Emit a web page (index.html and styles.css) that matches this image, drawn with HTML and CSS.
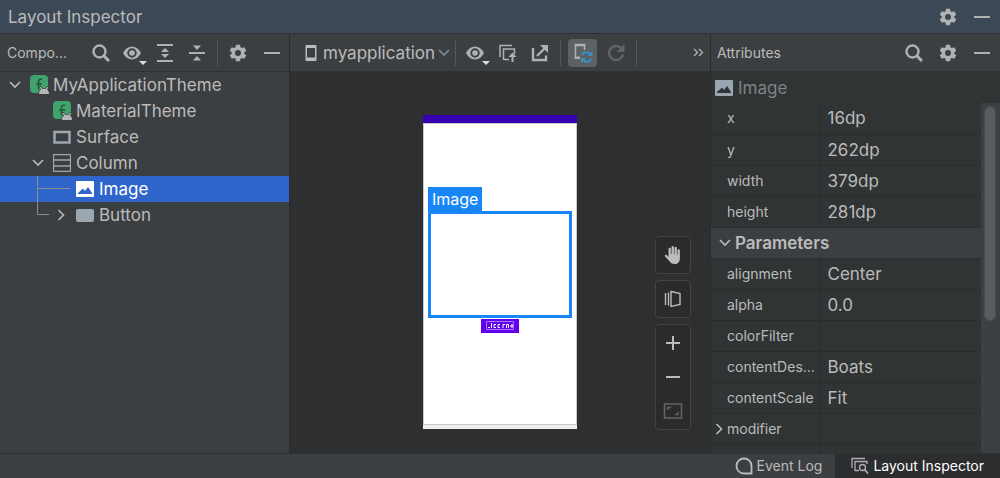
FILE: index.html
```html
<!DOCTYPE html>
<html lang="en">
<head>
  <meta charset="UTF-8">
  <meta name="viewport" content="width=device-width, initial-scale=1.0">
  <title>Layout Inspector</title>
  <link rel="stylesheet" href="styles.css">
</head>
<body>
  <!-- Shared icons -->
  <svg class="sprite" aria-hidden="true">
    <symbol id="gear" viewBox="0 0 18 18">
      <path fill-rule="evenodd" d="M7 .8h4l.5 2.500 1.300.800 2.500-.9 2 3.500-2 1.600v1.400l2 1.600-2 3.500-2.500-.9-1.300.8-.5 2.500H7l-.5-2.500-1.300-.8-2.500.9-2-3.500 2-1.600V8.300l-2-1.600 2-3.500 2.500.9 1.300-.8zM9 6a3 3 0 1 0 0 6 3 3 0 0 0 0-6z"/>
    </symbol>
    <symbol id="dash" viewBox="0 0 18 18"><path d="M1 8h16v2H1z"/></symbol>
    <symbol id="search" viewBox="0 0 18 18">
      <circle cx="7.500" cy="7.500" r="6" fill="none" stroke="currentColor" stroke-width="2.400"/>
      <path d="M12 12l5 5" stroke="currentColor" stroke-width="3"/>
    </symbol>
    <symbol id="eye" viewBox="0 0 22 22">
      <path fill-rule="evenodd" d="M1 11C3.500 6.500 6.500 4.500 10 4.500S16.500 6.500 19 11c-2.500 4.500-5.500 6.500-9 6.500S3.500 15.500 1 11zM10 6.300a4.700 4.700 0 1 0 0 9.400 4.700 4.700 0 0 0 0-9.400z"/>
      <circle cx="10" cy="11" r="2.800"/>
    </symbol>
    <symbol id="image" viewBox="0 0 18 16">
      <path fill-rule="evenodd" d="M1 0h16a1 1 0 0 1 1 1v14a1 1 0 0 1-1 1H1a1 1 0 0 1-1-1V1a1 1 0 0 1 1-1zM2 13h14v-1l-4-6-3 4-2-2.500L2 12z"/>
    </symbol>
    <symbol id="compose" viewBox="0 0 20 20">
      <rect x="0" y="0" width="18" height="18" rx="4" fill="#3fa36b"/>
      <path d="M12 4.500c-2.500-.8-3.500.2-3.500 2.500v7.500M6 9h6" fill="none" stroke="#23543c" stroke-width="1.500"/>
      <path d="M8 20c0-3 1-5 2.300-6L8.800 11h2l1.500 2h3.400l1.500-2h2L17.700 14c1.300 1 2 3 2 6z" fill="#3c3f41"/>
      <path d="M9 19c0-2.300.8-3.800 2-4.500L9.500 12h1.300l1.300 1.800h3.800l1.300-1.800h1.300L17 14.500c1.200.7 2 2.200 2 4.500z" fill="#b4b7b9"/>
    </symbol>
    <symbol id="chevron-down" viewBox="0 0 12 12"><path d="M1 3l5 5 5-5" fill="none" stroke="currentColor" stroke-width="1.600"/></symbol>
    <symbol id="chevron-right" viewBox="0 0 12 12"><path d="M3.500 1l5 5-5 5" fill="none" stroke="currentColor" stroke-width="1.600"/></symbol>
  </svg>

  <header class="title-bar">
    <h1>Layout Inspector</h1>
    <button class="icon-btn" aria-label="Settings"><svg class="icon"><use href="#gear"/></svg></button>
    <button class="icon-btn" aria-label="Hide"><svg class="icon"><use href="#dash"/></svg></button>
  </header>

  <main class="workspace">
    <section class="tree-panel">
      <div class="toolbar tree-toolbar">
        <h2>Compo...</h2>
        <button class="icon-btn" aria-label="Search"><svg class="icon"><use href="#search"/></svg></button>
        <button class="icon-btn has-menu" aria-label="View options"><svg class="icon-eye"><use href="#eye"/></svg></button>
        <button class="icon-btn" aria-label="Expand all">
          <svg class="icon" viewBox="0 0 18 18"><path d="M1 0h16v2H1zM1 16h16v2H1zM9 4l4 4H5zM9 14l4-4H5z"/></svg>
        </button>
        <button class="icon-btn" aria-label="Collapse all">
          <svg class="icon" viewBox="0 0 18 18"><path d="M1 8h16v2H1zM9 6l4-4.500H5zM9 12l4 4.500H5z"/></svg>
        </button>
        <span class="separator"></span>
        <button class="icon-btn" aria-label="Settings"><svg class="icon"><use href="#gear"/></svg></button>
        <button class="icon-btn last" aria-label="Hide"><svg class="icon"><use href="#dash"/></svg></button>
      </div>
      <ul class="tree">
        <li class="node"><svg class="chevron"><use href="#chevron-down"/></svg><svg class="compose-icon"><use href="#compose"/></svg>MyApplicationTheme</li>
        <li class="node level-2"><svg class="compose-icon"><use href="#compose"/></svg>MaterialTheme</li>
        <li class="node level-2"><svg class="node-icon" viewBox="0 0 18 18"><path d="M1.500 4h15v10.500h-15z" fill="none" stroke="#9aa7b0" stroke-width="2.500"/></svg>Surface</li>
        <li class="node level-1"><svg class="chevron"><use href="#chevron-down"/></svg><svg class="node-icon" viewBox="0 0 18 18"><path d="M.5.500h17v17H.5zM.5 6h17M.5 12h17" fill="none" stroke="#9aa7b0" stroke-width="1.300"/></svg>Column</li>
        <li class="node child selected"><svg class="guide" viewBox="0 0 39 26"><path d="M.5 0v26M.5 12.500H33" fill="none" stroke="#8b8e90"/></svg><svg class="image-icon"><use href="#image"/></svg>Image</li>
        <li class="node child"><svg class="guide short" viewBox="0 0 18 26"><path d="M.5 0v12.500H12" fill="none" stroke="#8b8e90"/></svg><svg class="chevron"><use href="#chevron-right"/></svg><svg class="node-icon" viewBox="0 0 18 18"><rect y="3" width="18" height="13" rx="2" fill="#9aa7b0"/></svg>Button</li>
      </ul>
    </section>

    <section class="view-panel">
      <div class="toolbar view-toolbar">
        <label class="process">
          <svg class="device" viewBox="0 0 12 18"><path fill-rule="evenodd" d="M1.500 1h9a1 1 0 0 1 1 1v14a1 1 0 0 1-1 1h-9a1 1 0 0 1-1-1V2a1 1 0 0 1 1-1zM2 4v9.500h8V4z"/></svg>
          <select aria-label="Process"><option>myapplication</option></select>
          <svg class="chevron"><use href="#chevron-down"/></svg>
        </label>
        <span class="separator"></span>
        <button class="icon-btn has-menu" aria-label="View options"><svg class="icon-eye"><use href="#eye"/></svg></button>
        <button class="icon-btn" aria-label="Load overlay">
          <svg class="icon" viewBox="0 0 18 18"><path d="M1 13V1.500h12M4.500 16V5h11v5M4.500 15.500H10" fill="none" stroke="currentColor" stroke-width="1.500"/><path d="M13.500 8.500l4 4.500h-3v5h-2v-5h-3z"/></svg>
        </button>
        <button class="icon-btn" aria-label="Export snapshot">
          <svg class="icon" viewBox="0 0 18 18"><path d="M2 4v12h13v-4.500M6 12l8-8" fill="none" stroke="currentColor" stroke-width="2.400"/><path d="M9 1h8v8z"/></svg>
        </button>
        <span class="separator"></span>
        <button class="icon-btn pressed" aria-label="Live updates" aria-pressed="true">
          <svg class="live" viewBox="0 0 20 20"><path d="M7 15H2.500V1.500h9V7" fill="none" stroke="currentColor" stroke-width="1.500"/><path d="M1.800 1h10.500v2.200H1.800zM1.800 13.500H7V16H1.800z"/><path d="M9 12.500a4.700 4.700 0 0 1 8.500-1M18.500 15.500a4.700 4.700 0 0 1-8.500 1" fill="none" stroke="#3592c4" stroke-width="1.900"/><path d="M19.500 8v5h-5zM8 20v-5h5z" fill="#3592c4"/></svg>
        </button>
        <button class="icon-btn refresh" aria-label="Refresh" disabled>
          <svg class="icon" viewBox="0 0 18 18"><path d="M14.500 4.500A7 7 0 1 0 16 10.500" fill="none" stroke="currentColor" stroke-width="2.400"/><path d="M17.500 0v8h-8z"/></svg>
        </button>
        <span class="separator"></span>
        <button class="icon-btn more" aria-label="More actions">
          <svg class="icon" viewBox="0 0 18 18"><path d="M4 5l3.500 3.500L4 12M9 5l3.500 3.500L9 12" fill="none" stroke="currentColor" stroke-width="1.400"/></svg>
        </button>
      </div>
      <div class="canvas">
        <div class="phone">
          <div class="phone-status"></div>
          <div class="phone-body">
            <span class="selection-label">Image</span>
            <div class="selection-box"></div>
            <svg class="phone-button" viewBox="0 0 38 14"><path d="M0 0h38v14H0z" fill="#6200ee"/><path d="M5.500 2.500h27v8h-27z" fill="none" stroke="#a873f5"/><path d="M7 8.500h2M10.500 4v5M15 5.500h-2v3h2M19 5.500h-2v3h2M22 9V5.500h2M25.500 9V5.500h2V9M31 5v4M29 7h3" fill="none" stroke="#ffffff"/></svg>
          </div>
          <div class="phone-nav"></div>
        </div>
        <div class="canvas-tools">
          <button class="tool-btn" aria-label="Pan">
            <svg viewBox="0 0 20 20"><path d="M5.500 12V4a1.200 1.200 0 0 1 2.400 0v5h.6V2.200a1.200 1.200 0 0 1 2.400 0V9h.6V3a1.200 1.200 0 0 1 2.400 0v6.500h.6V5.500a1.200 1.200 0 0 1 2.400 0V13c0 4-2 6-5.200 6-2.700 0-4-1-5.200-2.800L2 11.500c-.8-1.300.9-2.300 2-1.300z"/></svg>
          </button>
          <button class="tool-btn" aria-label="3D mode">
            <svg viewBox="0 0 20 20"><path d="M2.500 4v12M5.500 3.500v13M8 2.500l9 2v11l-9 2z" fill="none" stroke="currentColor" stroke-width="1.400"/></svg>
          </button>
          <div class="zoom-group">
            <button aria-label="Zoom in"><svg viewBox="0 0 20 20"><path d="M3 9h6V3h2v6h6v2h-6v6H9v-6H3z"/></svg></button>
            <button aria-label="Zoom out"><svg viewBox="0 0 20 20"><path d="M3 9h14v2H3z"/></svg></button>
            <button aria-label="Zoom to fit" disabled><svg viewBox="0 0 20 20"><path d="M1.500 3h17v14h-17zM5 9V6.500h3M15 11v2.500h-3" fill="none" stroke="currentColor" stroke-width="1.500"/></svg></button>
          </div>
        </div>
      </div>
    </section>

    <section class="attributes-panel">
      <div class="toolbar attributes-toolbar">
        <h2>Attributes</h2>
        <button class="icon-btn" aria-label="Search"><svg class="icon"><use href="#search"/></svg></button>
        <button class="icon-btn" aria-label="Settings"><svg class="icon"><use href="#gear"/></svg></button>
        <button class="icon-btn" aria-label="Hide"><svg class="icon"><use href="#dash"/></svg></button>
      </div>
      <div class="component-name"><svg class="image-icon"><use href="#image"/></svg>Image</div>
      <div class="attributes-scroll">
        <table>
          <tbody>
            <tr><th scope="row">x</th><td>16dp</td></tr>
            <tr><th scope="row">y</th><td>262dp</td></tr>
            <tr><th scope="row">width</th><td>379dp</td></tr>
            <tr><th scope="row">height</th><td>281dp</td></tr>
          </tbody>
          <tbody>
            <tr class="group"><th colspan="2"><button><svg class="chevron"><use href="#chevron-down"/></svg>Parameters</button></th></tr>
            <tr><th scope="row">alignment</th><td>Center</td></tr>
            <tr><th scope="row">alpha</th><td>0.0</td></tr>
            <tr><th scope="row">colorFilter</th><td></td></tr>
            <tr><th scope="row">contentDes...</th><td>Boats</td></tr>
            <tr><th scope="row">contentScale</th><td>Fit</td></tr>
            <tr class="expandable"><th scope="row"><svg class="chevron"><use href="#chevron-right"/></svg>modifier</th><td></td></tr>
            <tr><th></th><td></td></tr>
          </tbody>
        </table>
        <div class="scrollbar"><div class="thumb"></div></div>
      </div>
    </section>
  </main>

  <footer class="status-bar">
    <button class="tab">
      <svg viewBox="0 0 18 18"><path d="M16.500 16.500H9A7.500 7.500 0 1 1 16.500 9z" fill="none" stroke="currentColor" stroke-width="1.800"/></svg>Event Log
    </button>
    <button class="tab active">
      <svg viewBox="0 0 18 18"><path d="M1 11V1.500h13M4 14V4.500h12V7M4 13.500h4" fill="none" stroke="#afb1b3" stroke-width="1.300"/><circle cx="11.500" cy="10.500" r="3" fill="none" stroke="#afb1b3" stroke-width="1.300"/><path d="M13.500 12.500l3.500 4" stroke="#afb1b3" stroke-width="1.700"/></svg>Layout Inspector
    </button>
  </footer>
</body>
</html>
```

FILE: styles.css
```css
* {
  box-sizing: border-box;
}
body {
  display: flex;
  flex-direction: column;
  height: 100vh;
  margin: 0;
  overflow: hidden;
  background: #3c3f41;
  color: #bbbbbb;
  font-family: Inter, "Liberation Sans", sans-serif;
  font-size: 17px;
  line-height: 20px;
}
h1, h2 {
  flex: 1;
  margin: 0;
  font-weight: 400;
}
h1 {
  font-size: 17px;
}
h2 {
  font-size: 14px;
}
button, select {
  padding: 0;
  border: none;
  background: none;
  color: inherit;
  font: inherit;
}
svg {
  display: block;
  flex: none;
  fill: currentColor;
}
.sprite {
  position: absolute;
  width: 0;
  height: 0;
}
.icon {
  width: 18px;
  height: 18px;
}
.icon-eye {
  width: 22px;
  height: 22px;
}
.chevron {
  width: 12px;
  height: 12px;
}

/* Title bar and toolbars */
.title-bar {
  display: flex;
  align-items: center;
  gap: 2px;
  height: 34px;
  padding: 0 2px 0 8px;
  background: #3d4856;
  border-bottom: 1px solid #2f3336;
}
.toolbar {
  display: flex;
  align-items: center;
  height: 38px;
  background: #3c3f41;
  border-bottom: 1px solid #2e3032;
}
.icon-btn {
  position: relative;
  display: flex;
  flex: none;
  align-items: center;
  justify-content: center;
  width: 32px;
  height: 28px;
  color: #afb1b3;
}
.icon-btn.last {
  margin-left: 2px;
}
.has-menu::after {
  content: "";
  position: absolute;
  right: 2px;
  bottom: 2px;
  border: 4px solid transparent;
  border-top-color: #dddddd;
  border-bottom: none;
}
.separator {
  width: 1px;
  height: 26px;
  margin: 0 4px;
  background: #55585a;
}

/* Component tree */
.workspace {
  display: flex;
  flex: 1;
  min-height: 0;
}
.tree-panel {
  width: 29%;
  border-right: 1px solid #2b2b2b;
}
.tree-toolbar {
  padding: 0 1px 0 7px;
}
.tree {
  margin: 0;
  padding: 0;
  list-style: none;
}
.node {
  display: flex;
  align-items: center;
  height: 26px;
  padding-left: 9px;
}
.node .chevron {
  margin-right: 9px;
}
.level-1 {
  padding-left: 32px;
}
.level-2 {
  padding-left: 53px;
}
.child {
  padding-left: 37px;
}
.selected {
  background: #2f65ca;
  color: #ffffff;
}
.guide {
  width: 39px;
  height: 26px;
}
.guide.short {
  width: 18px;
}
.compose-icon {
  width: 20px;
  height: 20px;
  margin-right: 3px;
}
.node-icon {
  width: 18px;
  height: 18px;
  margin-right: 5px;
}
.image-icon {
  width: 18px;
  height: 16px;
  margin-right: 5px;
}

/* Device view */
.view-panel {
  display: flex;
  flex: 1;
  flex-direction: column;
}
.view-toolbar {
  padding: 0 2px 0 15px;
}
.process {
  display: flex;
  align-items: center;
  margin-right: 1px;
}
.process select {
  margin: 0 2px 0 6px;
  appearance: none;
}
.process .chevron {
  color: #7f8b93;
}
.device {
  width: 12px;
  height: 18px;
}
.pressed {
  width: 29px;
  margin: 0 3px;
  border-radius: 4px;
  background: #5c6164;
}
.live {
  width: 20px;
  height: 20px;
}
.refresh {
  color: #626567;
}
.more {
  width: 18px;
  margin: 0 0 0 auto;
}
.canvas {
  position: relative;
  display: flex;
  flex: 1;
  align-items: flex-start;
  justify-content: center;
  padding-top: 43px;
  background: #2d2f31;
}
.phone {
  display: flex;
  flex-direction: column;
  width: 154px;
  height: 314px;
}
.phone-status {
  height: 8px;
  background: #3700b3;
}
.phone-body {
  display: flex;
  flex: 1;
  flex-direction: column;
  align-items: flex-start;
  padding: 63px 4px 0;
  background: #ffffff;
  border: 1px solid #c8c8c8;
}
.selection-label {
  padding: 2px 4px;
  background: #1886f7;
  color: #ffffff;
  font-size: 16px;
}
.selection-box {
  width: 100%;
  height: 107px;
  border: 3px solid #1886f7;
}
.phone-button {
  align-self: center;
  width: 38px;
  height: 14px;
  margin-top: 1px;
}
.phone-nav {
  height: 4px;
  background: #eeeeee;
}
.canvas-tools {
  position: absolute;
  right: 19px;
  bottom: 23px;
  display: flex;
  flex-direction: column;
  gap: 6px;
}
.canvas-tools svg {
  width: 20px;
  height: 20px;
}
.tool-btn, .zoom-group {
  width: 36px;
  border: 1px solid #414345;
  border-radius: 4px;
  background: #2b2b2b;
}
.tool-btn {
  display: flex;
  align-items: center;
  justify-content: center;
  height: 38px;
}
.zoom-group {
  display: flex;
  flex-direction: column;
  align-items: center;
  gap: 14px;
  padding: 8px 0;
}
.zoom-group button:disabled {
  color: #626567;
}

/* Attributes table */
.attributes-panel {
  display: flex;
  flex-direction: column;
  width: 29%;
  border-left: 1px solid #2b2b2b;
  background: #313435;
}
.attributes-toolbar {
  gap: 2px;
  padding: 0 2px 0 6px;
}
.component-name {
  display: flex;
  align-items: center;
  height: 31px;
  padding-left: 4px;
  color: #808284;
}
.component-name .image-icon {
  color: #9aa7b0;
}
.attributes-scroll {
  display: flex;
  flex: 1;
  align-items: flex-start;
  min-height: 0;
  overflow: hidden;
}
table {
  flex: 1;
  table-layout: fixed;
  border-collapse: collapse;
}
tr {
  height: 31px;
}
th, td {
  padding: 0 0 0 7px;
  border-bottom: 1px solid #2a2c2d;
  text-align: left;
  font-weight: 400;
}
th {
  width: 109px;
  padding-left: 16px;
  border-right: 1px solid #2a2c2d;
  font-size: 14px;
}
.expandable .chevron {
  float: left;
  margin: 4px 2px 0 -14px;
}
.group th {
  padding-left: 8px;
  border-right: none;
  background: #3c3f41;
}
.group button {
  display: flex;
  align-items: center;
  gap: 4px;
  font-size: 17px;
  font-weight: 600;
}
.scrollbar {
  align-self: stretch;
  width: 19px;
  padding: 3px 4px 0 3px;
  background: #3d4042;
}
.thumb {
  height: 62%;
  border: 1px solid #4a4d4f;
  border-radius: 6px;
  background: #595b5d;
}

/* Bottom tool window tabs */
.status-bar {
  display: flex;
  justify-content: flex-end;
  height: 25px;
  border-top: 1px solid #2e3032;
}
.tab {
  display: flex;
  align-items: center;
  gap: 4px;
  padding: 0 13px;
  font-size: 14px;
}
.tab svg {
  width: 18px;
  height: 18px;
}
.tab.active {
  padding: 0 16px;
  background: #2b2d2f;
  color: #ffffff;
}
```
